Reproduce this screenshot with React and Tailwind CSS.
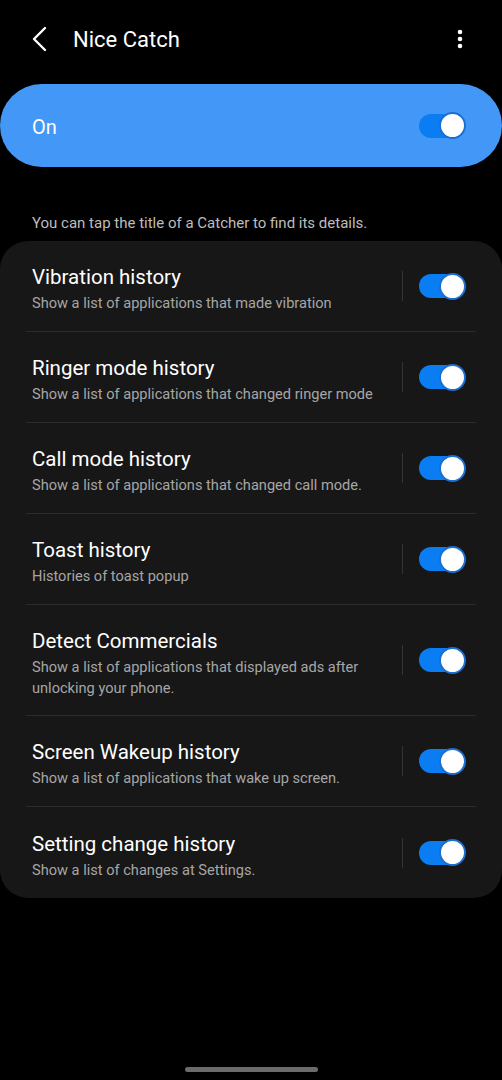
import React from "react";

const rows = [
  { t: "Vibration history", s: "Show a list of applications that made vibration" },
  { t: "Ringer mode history", s: "Show a list of applications that changed ringer mode" },
  { t: "Call mode history", s: "Show a list of applications that changed call mode." },
  { t: "Toast history", s: "Histories of toast popup" },
  { t: "Detect Commercials", s: "Show a list of applications that displayed ads after unlocking your phone." },
  { t: "Screen Wakeup history", s: "Show a list of applications that wake up screen." },
  { t: "Setting change history", s: "Show a list of changes at Settings." },
];

function Toggle() {
  return (
    <div className="relative w-[47px] h-[27px] flex items-center">
      <div className="w-[46px] h-[24px] rounded-full bg-[#0a7df2]" />
      <div className="absolute right-0 top-0 w-[27px] h-[27px] rounded-full bg-white border-2 border-[#1b6fd0]" />
    </div>
  );
}

export default function App() {
  return (
    <div className="w-[502px] h-[1080px] bg-black text-white flex flex-col" style={{ fontFamily: "Roboto, 'Noto Sans', sans-serif" }}>
      <div className="h-[78px] flex items-center pl-[30px] pr-[39px]">
        <svg width="20" height="26" viewBox="0 0 20 26" className="mr-[23px]">
          <path d="M15 2 L4 13 L15 24" fill="none" stroke="white" strokeWidth="2.4" strokeLinecap="round" strokeLinejoin="round" />
        </svg>
        <span className="text-[22px] flex-1">Nice Catch</span>
        <svg width="6" height="20" viewBox="0 0 6 20">
          <circle cx="3" cy="3" r="2.3" fill="white" />
          <circle cx="3" cy="10" r="2.3" fill="white" />
          <circle cx="3" cy="17" r="2.3" fill="white" />
        </svg>
      </div>
      <div className="mt-[6px] h-[83px] rounded-[42px] bg-[#4297f7] flex items-center pl-[32px] pr-[36px]">
        <span className="text-[20px] flex-1 pt-[3px]">On</span>
        <Toggle />
      </div>
      <div className="mt-[44px] pl-[32px] text-[15px] text-[#bdbdbd] h-[30px] pt-[1px]">You can tap the title of a Catcher to find its details.</div>
      <div className="bg-[#171717] rounded-[28px] flex flex-col">
        {rows.map((r, i) => (
          <div key={i} className={"mx-[26px] flex items-center " + (i < rows.length - 1 ? "border-b border-[#2c2c2c] " : "") + (r.t === "Detect Commercials" ? "h-[111px]" : "h-[91px]")}>
            <div className="flex-1 pl-[6px] pr-[20px] pt-[6px]">
              <div className="text-[20.5px] leading-[26px]">{r.t}</div>
              <div className="text-[14.6px] leading-[21px] text-[#a6a6a6] mt-[3px]">{r.s}</div>
            </div>
            <div className="w-px h-[30px] bg-[#333333] mr-[16px]" />
            <div className="mr-[10px]"><Toggle /></div>
          </div>
        ))}
      </div>
      <div className="flex-1" />
      <div className="flex justify-center pb-[8px]">
        <div className="w-[133px] h-[5px] rounded-full bg-[#6b6b6b]" />
      </div>
    </div>
  );
}
